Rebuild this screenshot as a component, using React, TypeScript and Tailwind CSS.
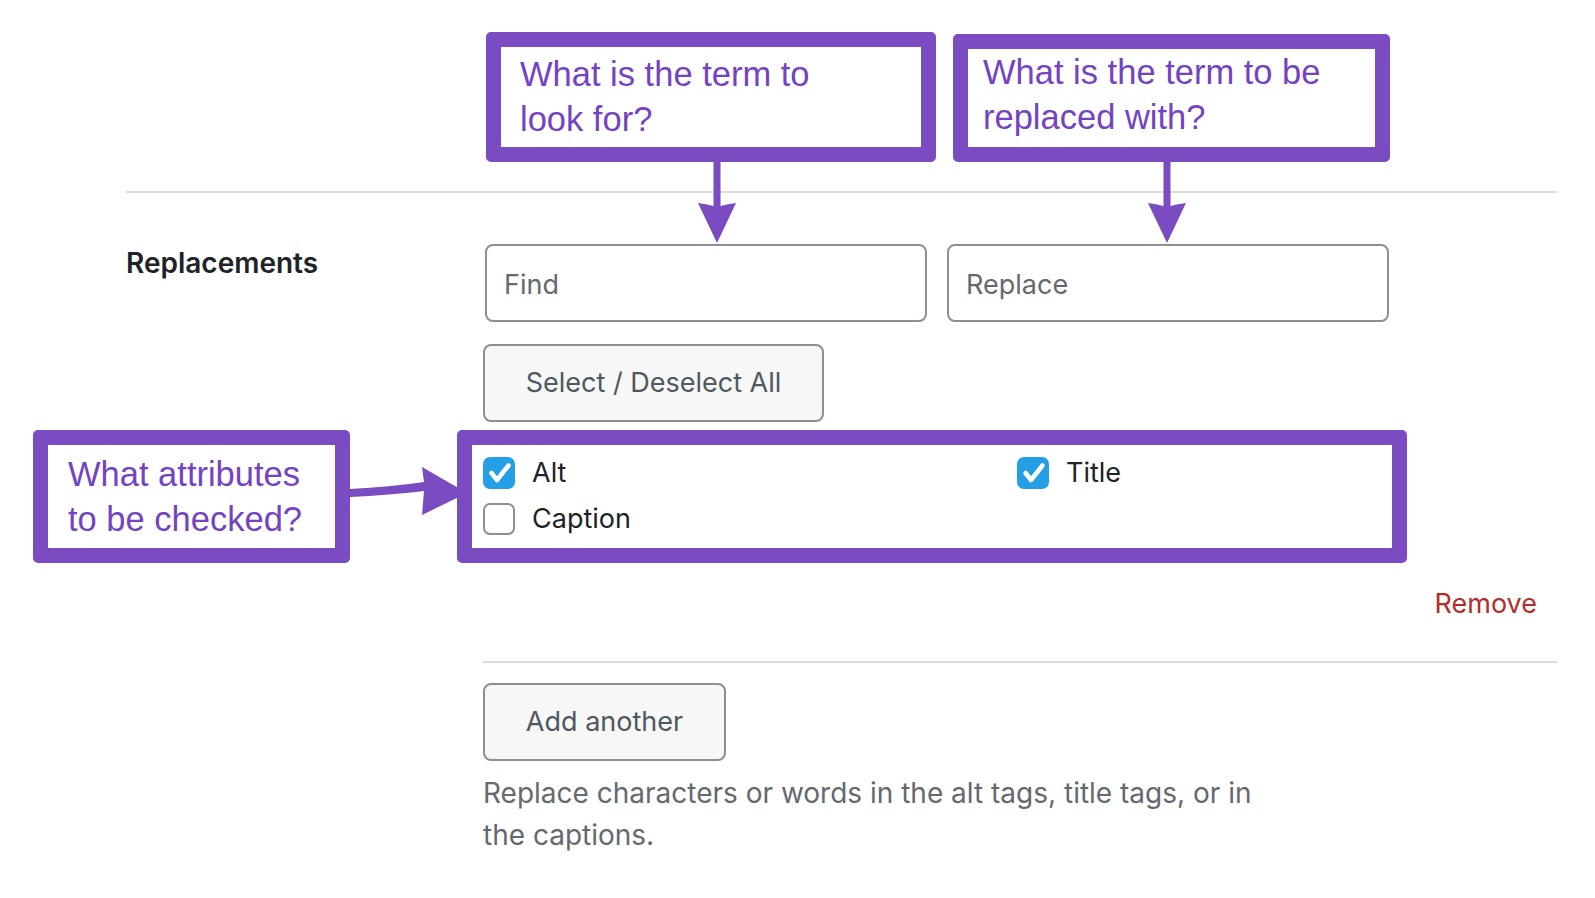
import React from 'react';

// Purple annotation box drawn over the settings screenshot
const Callout: React.FC<{ className?: string; children: React.ReactNode }> = ({ className = '', children }) => (
  <div
    className={`shrink-0 border-[15px] border-[#7b4bc1] rounded-[5px] bg-white font-['Liberation_Sans',Arial,sans-serif] text-[34.5px] leading-[45px] text-[#7443c2] ${className}`}
  >
    {children}
  </div>
);

const DownArrow: React.FC<{ className?: string }> = ({ className = '' }) => (
  <svg className={`absolute ${className}`} width="40" height="84" viewBox="0 0 40 84">
    <path d="M16.5 0 H23.5 V46 Q31 44 39 43 L20 83 L1 43 Q9 44 16.5 46 Z" fill="#7b4bc1" />
  </svg>
);

const Checkbox: React.FC<{ checked?: boolean; label: string }> = ({ checked, label }) => (
  <label className="flex items-center gap-[17px]">
    {checked ? (
      <span className="flex h-[32px] w-[32px] items-center justify-center rounded-[7px] bg-[#249fe6]">
        <svg width="32" height="32" viewBox="0 0 32 32">
          <path d="M8.5 16 L14 23 L25.5 8.5" fill="none" stroke="white" strokeWidth="4.5" strokeLinecap="round" strokeLinejoin="round" />
        </svg>
      </span>
    ) : (
      <span className="h-[32px] w-[32px] rounded-[7px] border-2 border-[#8c8f94] bg-white" />
    )}
    <span className="text-[27px] leading-[32px] text-[#1d2327]">{label}</span>
  </label>
);

export default function App() {
  return (
    <div className="relative min-h-screen w-full overflow-hidden bg-white font-[Inter,sans-serif]">
      {/* top annotations */}
      <div className="flex items-start gap-[17px] pl-[486px] pt-[32px]">
        <Callout className="h-[130px] w-[450px] pl-[19px] pt-[5px]">
          What is the term to
          <br />
          look for?
        </Callout>
        <Callout className="mt-[2px] h-[128px] w-[437px] pl-[15px] pt-[1px]">
          What is the term to be
          <br />
          replaced with?
        </Callout>
      </div>
      <DownArrow className="left-[697px] top-[160px]" />
      <DownArrow className="left-[1147px] top-[160px]" />

      <div className="ml-[126px] mr-[38px] mt-[29px] h-[2px] bg-[#dcdcde]" />

      {/* Replacements row */}
      <div className="mt-[51px] flex">
        <div className="w-[485px] shrink-0 pl-[126px]">
          <span className="text-[28px] font-semibold leading-[38px] text-[#1d2327]">Replacements</span>
        </div>
        <div className="flex flex-col items-start">
          <div className="flex gap-[20px]">
            <input
              placeholder="Find"
              className="h-[78px] w-[442px] rounded-[8px] border-2 border-[#8c8f94] bg-white pl-[17px] pt-[3px] text-[27px] text-[#1d2327] placeholder:text-[#646970] outline-none"
            />
            <input
              placeholder="Replace"
              className="h-[78px] w-[442px] rounded-[8px] border-2 border-[#8c8f94] bg-white pl-[17px] pt-[3px] text-[27px] text-[#1d2327] placeholder:text-[#646970] outline-none"
            />
          </div>
          <button className="-ml-[2px] mt-[22px] h-[78px] w-[341px] rounded-[8px] border-2 border-[#8c8f94] bg-[#f6f7f7] text-[27px] text-[#50575e]">
            Select / Deselect All
          </button>
        </div>
      </div>

      {/* attributes row */}
      <div className="mt-[8px] flex pl-[33px]">
        <Callout className="h-[133px] w-[317px] pl-[20px] pt-[7px]">
          What attributes
          <br />
          to be checked?
        </Callout>
        <div className="w-[107px] shrink-0">
          <svg width="107" height="133" className="overflow-visible">
            <path d="M0 59 Q40 57 74 52 L72 37 L117 63 L72 85 L74 61 Q40 65 0 67 Z" fill="#7b4bc1" />
          </svg>
        </div>
        <div className="h-[133px] w-[950px] shrink-0 rounded-[5px] border-[15px] border-[#7b4bc1] bg-white pl-[11px] pt-[12px]">
          <div className="grid grid-cols-[534px_1fr] gap-y-[14px]">
            <Checkbox checked label="Alt" />
            <Checkbox checked label="Title" />
            <Checkbox label="Caption" />
          </div>
        </div>
      </div>

      <div className="mt-[22px] pr-[58px] text-right text-[27px] leading-[38px] text-[#b32d2e]">Remove</div>

      <div className="ml-[483px] mr-[38px] mt-[38px] h-[2px] bg-[#dcdcde]" />

      <button className="ml-[483px] mt-[20px] h-[78px] w-[243px] rounded-[8px] border-2 border-[#8c8f94] bg-[#f6f7f7] text-[27px] text-[#50575e]">
        Add another
      </button>
      <p className="ml-[483px] mt-[11px] text-[28px] leading-[42px] text-[#646970]">
        Replace characters or words in the alt tags, title tags, or in
        <br />
        the captions.
      </p>
    </div>
  );
}
